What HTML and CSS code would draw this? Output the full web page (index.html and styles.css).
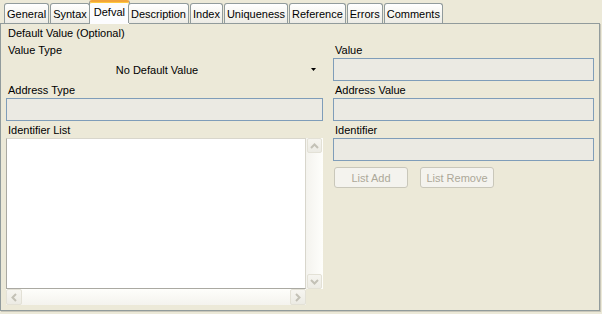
FILE: index.html
```html
<!DOCTYPE html>
<html>
<head>
<meta charset="utf-8">
<link rel="stylesheet" href="styles.css">
</head>
<body>
<div class="window">
  <div class="tabs">
    <div class="tab">General</div>
    <div class="tab">Syntax</div>
    <div class="tab active">Defval</div>
    <div class="tab">Description</div>
    <div class="tab">Index</div>
    <div class="tab">Uniqueness</div>
    <div class="tab">Reference</div>
    <div class="tab">Errors</div>
    <div class="tab">Comments</div>
  </div>
  <div class="panel">
    <div class="title">Default Value (Optional)</div>
    <div class="cols">
      <div class="col col-left">
        <div class="label">Value Type</div>
        <div class="combo">
          <span class="combo-text">No Default Value</span>
          <span class="combo-arrow"><svg width="5" height="3" viewBox="0 0 5 3"><path d="M0 0H5L2.5 3Z" fill="#000"/></svg></span>
        </div>
        <div class="label">Address Type</div>
        <div class="field"></div>
        <div class="label">Identifier List</div>
        <div class="listpane">
          <div class="list"></div>
          <div class="vscroll">
            <div class="sbtn"><svg width="9" height="6" viewBox="0 0 9 6"><path d="M1 5L4.5 1.5L8 5" fill="none" stroke="#c3c1b6" stroke-width="2"/></svg></div>
            <div class="sbtn"><svg width="9" height="6" viewBox="0 0 9 6"><path d="M1 1L4.5 4.5L8 1" fill="none" stroke="#c3c1b6" stroke-width="2"/></svg></div>
          </div>
          <div class="hscroll">
            <div class="sbtn"><svg width="6" height="9" viewBox="0 0 6 9"><path d="M5 1L1.5 4.5L5 8" fill="none" stroke="#c3c1b6" stroke-width="2"/></svg></div>
            <div class="sbtn"><svg width="6" height="9" viewBox="0 0 6 9"><path d="M1 1L4.5 4.5L1 8" fill="none" stroke="#c3c1b6" stroke-width="2"/></svg></div>
          </div>
          <div class="corner"></div>
        </div>
      </div>
      <div class="col col-right">
        <div class="label">Value</div>
        <div class="field"></div>
        <div class="label">Address Value</div>
        <div class="field"></div>
        <div class="label">Identifier</div>
        <div class="field"></div>
        <div class="buttons">
          <button class="btn" disabled>List Add</button>
          <button class="btn" disabled>List Remove</button>
        </div>
      </div>
    </div>
  </div>
</div>
</body>
</html>
```

FILE: styles.css
```css
html, body {
  margin: 0;
  padding: 0;
  background: #ece9d8;
}
body {
  font-family: "Liberation Sans", Arial, sans-serif;
  font-size: 11px;
  color: #000;
}
.window {
  width: 602px;
  height: 314px;
  background: #ece9d8;
  overflow: hidden;
}
.tabs {
  display: flex;
  align-items: flex-end;
  height: 23px;
  padding-left: 4px;
  position: relative;
  z-index: 2;
}
.tab {
  height: 19px;
  line-height: 20px;
  padding: 0 2px;
  margin-right: 1px;
  border: 1px solid #919b9c;
  border-bottom: none;
  border-radius: 3px 3px 0 0;
  background: linear-gradient(#ffffff, #f3f2ec 70%, #ecebe5);
  white-space: nowrap;
}
.tab.active {
  height: 22px;
  line-height: 20px;
  margin: 0 0 -1px -2px;
  padding: 0 4px;
  background: #fcfcfe;
  border-top: 2px solid #f2a43a;
  box-shadow: inset 0 1px 0 #ffc83c;
}
.tab.active + .tab {
  margin-left: -2px;
}
.panel {
  border: 1px solid #919b9c;
  box-shadow: 1px 1px 0 #c9c7ba;
  padding: 2px 5px 0 5px;
  width: 588px;
  height: 284px;
  position: relative;
  z-index: 1;
}
.title {
  height: 14px;
  line-height: 15px;
  padding-left: 2px;
  margin-bottom: 1px;
}
.cols {
  display: flex;
  gap: 10px;
}
.col-left { width: 317px; }
.col-right { width: 261px; }
.label {
  height: 16px;
  padding-top: 1px;
  line-height: 17px;
  padding-left: 2px;
}
.field {
  height: 21px;
  border: 1px solid #7f9db9;
  background: #ebeae3;
}
.combo {
  height: 23px;
  display: flex;
  align-items: center;
}
.combo-text {
  flex: 1;
  text-align: center;
  padding-left: 2px;
}
.combo-arrow {
  width: 14px;
  display: flex;
  justify-content: center;
  margin-right: 3px;
}
.listpane {
  display: grid;
  grid-template-columns: 300px 17px;
  grid-template-rows: 151px 16px;
}
.list {
  background: #fff;
  border: 1px solid #aaa9a2;
  border-right-color: #d8d6cc;
  border-top-color: #d8d6cc;
}
.vscroll {
  background: linear-gradient(90deg, #f4f3ee, #fefefb);
  display: flex;
  flex-direction: column;
  justify-content: space-between;
  padding: 0 1px;
}
.hscroll {
  background: linear-gradient(#fefefb, #f4f3ee);
  display: flex;
  justify-content: space-between;
}
.sbtn {
  width: 15px;
  height: 15px;
  box-sizing: border-box;
  border: 1px solid #e3e1d6;
  border-radius: 2px;
  background: linear-gradient(#f6f5f0, #ecebe4);
  display: flex;
  align-items: center;
  justify-content: center;
}
.hscroll .sbtn {
  width: 16px;
  height: 16px;
}
.corner { background: #ece9d8; }
.buttons {
  display: flex;
  gap: 12px;
  margin-top: 6px;
  padding-left: 1px;
}
.btn {
  width: 74px;
  height: 21px;
  border: 1px solid #c9c7ba;
  border-radius: 3px;
  background: #f4f3ee;
  color: #aca899;
  font-family: "Liberation Sans", Arial, sans-serif;
  font-size: 11px;
  padding: 0;
}
```
